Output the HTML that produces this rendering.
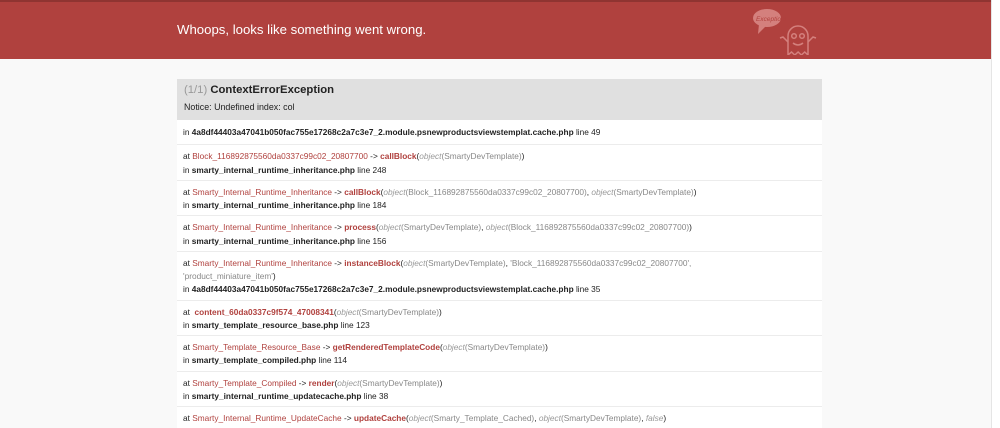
<!DOCTYPE html>
<html style="overflow:hidden;height:428px"><head><style>
body{margin:0;background:#f9f9f9;font-family:"Liberation Sans",sans-serif;font-size:8.3px;color:#222;width:1000px;height:428px;overflow:hidden;position:relative}
.hdr{position:absolute;left:0;top:0;width:992px;height:59px;background:#b0413e;border-top:2px solid #8f3431;box-sizing:border-box}
.hdr h1{position:absolute;left:177px;top:20px;margin:0;font-weight:normal;font-size:13.2px;color:#fff}
.sb{position:absolute;right:0;top:0;width:8px;height:428px;background:#fff;border-left:1px solid #e5e5e5}
.box{position:absolute;left:177px;top:79px;width:645px}
.t{background:#e0e0e0;height:41px;box-sizing:border-box;padding:5px 7px}
.t .n{font-size:11.3px;font-weight:bold;color:#222}.t .n span{color:#999;font-weight:normal}
.t .m{margin-top:6px;font-size:8.9px;color:#222}
.r{background:#fff;border-bottom:1px solid #ececec;padding:5px 6px 3px;line-height:13.25px}
.c{color:#b0413e}.f{color:#b0413e;font-weight:bold}.o{color:#999;font-style:italic}.g{color:#888}
b{color:#222}
</style></head><body>
<div class="hdr"><h1>Whoops, looks like something went wrong.</h1>
<svg style="position:absolute;left:750px;top:5px" width="72" height="48" viewBox="0 0 72 48" fill="none" stroke="#d4807d" stroke-width="1.5"><ellipse cx="17" cy="11" rx="14" ry="9" fill="#d4807d" stroke="none"/><path d="M9 17 L8 27 L16 19" fill="#d4807d" stroke="none"/><text x="6" y="14" font-size="6.5" fill="#b0413e" stroke="none" font-style="italic">Exception!</text><path d="M38 48 V29 a10 10 0 0 1 20 0 V48 l-3.3-3-3.3 3-3.3-3-3.3 3-3.3-3z"/><circle cx="44" cy="29" r="2.3"/><circle cx="52" cy="29" r="2.3"/><path d="M43 36 q5 4 10 0 M38 35 l-5-5 l-3 1 M58 35 l5-5 l3 1"/></svg></div>
<div class="sb"></div>
<div class="box">
<div class="t"><div class="n"><span>(1/1)</span> ContextErrorException</div><div class="m">Notice: Undefined index: col</div></div>
<div class="r" style="padding:6px 6px 5px">in <b>4a8df44403a47041b050fac755e17268c2a7c3e7_2.module.psnewproductsviewstemplat.cache.php</b> line 49</div>
<div class="r">at <span class="c">Block_116892875560da0337c99c02_20807700</span> -&gt; <span class="f">callBlock</span>(<span class="o">object</span><span class="g">(SmartyDevTemplate)</span>)<br>in <b>smarty_internal_runtime_inheritance.php</b> line 248</div>
<div class="r">at <span class="c">Smarty_Internal_Runtime_Inheritance</span> -&gt; <span class="f">callBlock</span>(<span class="o">object</span><span class="g">(Block_116892875560da0337c99c02_20807700)</span>, <span class="o">object</span><span class="g">(SmartyDevTemplate)</span>)<br>in <b>smarty_internal_runtime_inheritance.php</b> line 184</div>
<div class="r">at <span class="c">Smarty_Internal_Runtime_Inheritance</span> -&gt; <span class="f">process</span>(<span class="o">object</span><span class="g">(SmartyDevTemplate)</span>, <span class="o">object</span><span class="g">(Block_116892875560da0337c99c02_20807700)</span>)<br>in <b>smarty_internal_runtime_inheritance.php</b> line 156</div>
<div class="r">at <span class="c">Smarty_Internal_Runtime_Inheritance</span> -&gt; <span class="f">instanceBlock</span>(<span class="o">object</span><span class="g">(SmartyDevTemplate)</span>, <span class="g">'Block_116892875560da0337c99c02_20807700',<br>'product_miniature_item'</span>)<br>in <b>4a8df44403a47041b050fac755e17268c2a7c3e7_2.module.psnewproductsviewstemplat.cache.php</b> line 35</div>
<div class="r">at <span class="f">&nbsp;content_60da0337c9f574_47008341</span>(<span class="o">object</span><span class="g">(SmartyDevTemplate)</span>)<br>in <b>smarty_template_resource_base.php</b> line 123</div>
<div class="r">at <span class="c">Smarty_Template_Resource_Base</span> -&gt; <span class="f">getRenderedTemplateCode</span>(<span class="o">object</span><span class="g">(SmartyDevTemplate)</span>)<br>in <b>smarty_template_compiled.php</b> line 114</div>
<div class="r">at <span class="c">Smarty_Template_Compiled</span> -&gt; <span class="f">render</span>(<span class="o">object</span><span class="g">(SmartyDevTemplate)</span>)<br>in <b>smarty_internal_runtime_updatecache.php</b> line 38</div>
<div class="r">at <span class="c">Smarty_Internal_Runtime_UpdateCache</span> -&gt; <span class="f">updateCache</span>(<span class="o">object</span><span class="g">(Smarty_Template_Cached)</span>, <span class="o">object</span><span class="g">(SmartyDevTemplate)</span>, <span class="o">false</span>)<br>in <b>smarty_template_cached.php</b> line 100</div>
</div>
</body></html>
